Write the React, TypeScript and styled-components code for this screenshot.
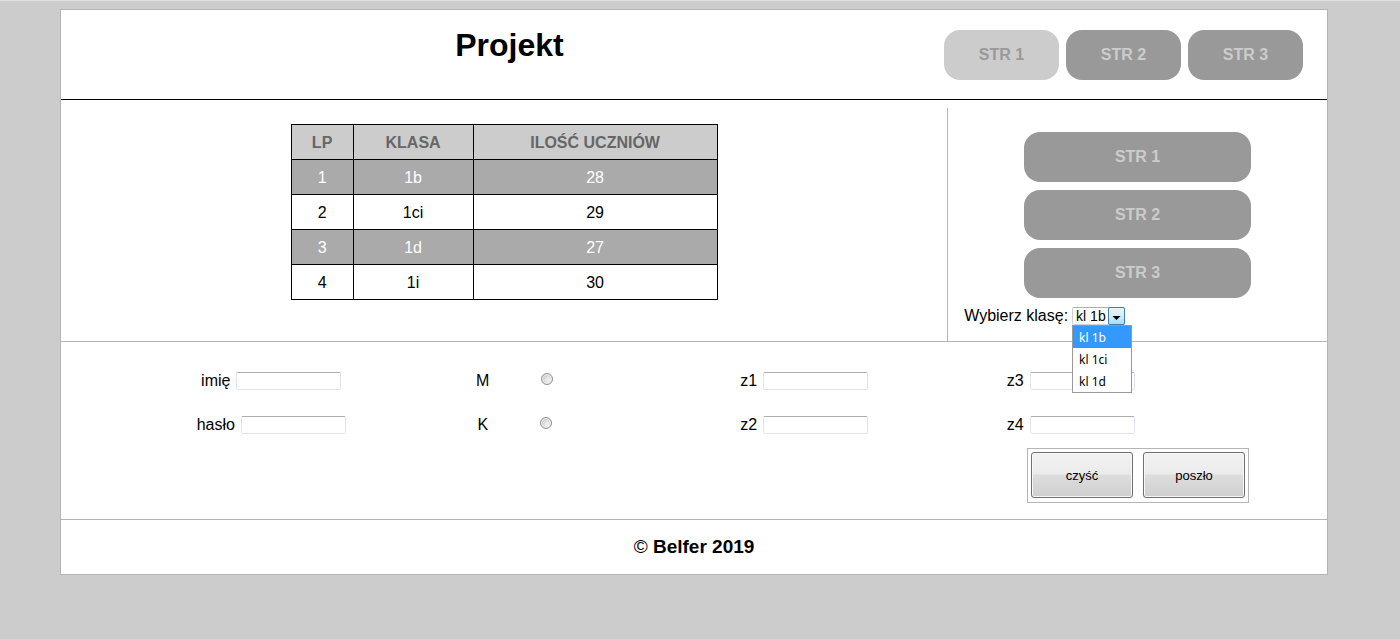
import React from "react";
import styled, { createGlobalStyle, css } from "styled-components";

const GlobalStyle = createGlobalStyle`
  * { box-sizing: border-box; }
  body {
    margin: 0;
    border-top: 1px solid #e2e2e2;
    background: #ccc;
    color: #000;
    font: 16px/20px "Liberation Sans", Arial, sans-serif;
  }
`;

const Page = styled.div`
  margin: 8px 72px 64px 60px;
  border: 1px solid #b5b5b5;
  background: #fff;
`;

const Header = styled.header`
  display: flex;
  align-items: flex-start;
  padding: 0 24px 0 14px;
  border-bottom: 1px solid #000;
`;

const Title = styled.h1`
  flex: 1;
  margin: 16px 0 0;
  font-size: 32px;
  line-height: 38px;
  text-align: center;
`;

const TopNav = styled.nav`
  display: flex;
  gap: 7px;
  padding: 20px 0 19px;
`;

const SideNav = styled.nav`
  display: flex;
  flex-direction: column;
  gap: 8px;
  padding: 0 60px;
`;

const NavLink = styled.a<{ $active?: boolean }>`
  display: block;
  min-width: 115px;
  border-radius: 16px;
  background: ${(p) => (p.$active ? "#ccc" : "#999")};
  color: ${(p) => (p.$active ? "#999" : "#ccc")};
  font-weight: bold;
  line-height: 50px;
  text-align: center;
  text-decoration: none;
`;

const Main = styled.main`
  display: flex;
  padding-top: 8px;
  border-bottom: 1px solid #b5b5b5;
`;

const Content = styled.section`
  flex: 1;
  padding: 16px 0 41px;
`;

const Sidebar = styled.aside`
  width: 30%;
  padding: 24px 16px 0;
  border-left: 1px solid #b5b5b5;
`;

const ClassTable = styled.table`
  margin: 0 auto;
  border-collapse: collapse;
  text-align: center;
`;

const cell = css`
  height: 35px;
  padding: 2px 0 0;
  border: 1px solid #000;
`;

const HeadCell = styled.th<{ $width: number }>`
  ${cell}
  width: ${(p) => p.$width}px;
  background: #ccc;
  color: #666;
`;

const Cell = styled.td`
  ${cell}
`;

const Row = styled.tr`
  &:nth-child(odd) {
    background: #aaa;
    color: #fff;
  }
`;

const Picker = styled.div`
  display: flex;
  align-items: center;
  gap: 4px;
  padding-top: 8px;
`;

const SelectBox = styled.div`
  position: relative;
  display: flex;
`;

const Select = styled.select`
  appearance: none;
  width: 53px;
  height: 18px;
  padding: 0 0 0 3px;
  border: 1px solid #ccd0d8;
  border-top-color: #abadb3;
  border-radius: 2px;
  background: #fff;
  color: #000;
  font: 14px/16px "Liberation Sans", Arial, sans-serif;
`;

const Arrow = styled.svg`
  position: absolute;
  top: 0;
  right: 0;
  pointer-events: none;
`;

const OptionList = styled.ul`
  position: absolute;
  top: 100%;
  left: 0;
  z-index: 1;
  width: 60px;
  margin: 0;
  padding: 0;
  border: 1px solid #999;
  background: #fff;
  font: 12px/20px "Noto Sans", sans-serif;
  list-style: none;
`;

const Option = styled.li<{ $selected: boolean }>`
  padding: 2px 0 0 6px;
  background: ${(p) => (p.$selected ? "#39f" : "#fff")};
  color: ${(p) => (p.$selected ? "#fff" : "#000")};
`;

const Form = styled.form`
  padding: 29px 0 16px;
  border-bottom: 1px solid #b5b5b5;
`;

const Fields = styled.div`
  display: grid;
  grid-template-columns: repeat(4, 1fr);
  row-gap: 24px;
  padding: 0 123px 0 77px;
`;

const Field = styled.label`
  display: flex;
  align-items: center;
  justify-content: center;
  gap: 6px;
`;

const TextBox = styled.input`
  width: 105px;
  height: 18px;
  padding: 0 2px;
  border: 1px solid #e2e3ea;
  border-top-color: #abadb3;
  border-radius: 2px;
  background: #fff;
`;

const Radio = styled.input`
  appearance: none;
  width: 12px;
  height: 12px;
  margin: 0 46px 4px;
  border: 1px solid #8e8f8f;
  border-radius: 50%;
  background: radial-gradient(circle at 65% 65%, #f4f4f4, #b8bcc0);
  box-shadow: inset 0 0 0 1px #f4f4f4;
`;

const Actions = styled.div`
  display: flex;
  gap: 10px;
  width: max-content;
  margin: 13px 78px 0 auto;
  padding: 3px 3px 4px;
  border: 1px solid #b5b5b5;
`;

const Button = styled.button`
  width: 102px;
  height: 46px;
  padding: 2px 0 0;
  border: 1px solid #707070;
  border-radius: 3px;
  background: linear-gradient(#f2f2f2, #ebebeb 48%, #ddd 50%, #cfcfcf);
  box-shadow: inset 0 0 0 1px #f8f8f8;
  color: #000;
  font: 13px/20px "Liberation Sans", Arial, sans-serif;
`;

const Footer = styled.footer`
  padding: 17px 0;
  font-size: 19px;
  font-weight: bold;
  text-align: center;
`;

const Mark = styled.span`
  font-weight: normal;
`;

const links = ["STR 1", "STR 2", "STR 3"];
const columns = [
  { name: "LP", width: 62 },
  { name: "KLASA", width: 120 },
  { name: "ILOŚĆ UCZNIÓW", width: 244 },
];
const classes = [
  ["1", "1b", "28"],
  ["2", "1ci", "29"],
  ["3", "1d", "27"],
  ["4", "1i", "30"],
];
const options = ["kl 1b", "kl 1ci", "kl 1d"];
const fields = [
  { label: "imię", type: "text" },
  { label: "M", type: "radio" },
  { label: "z1", type: "text" },
  { label: "z3", type: "text" },
  { label: "hasło", type: "password" },
  { label: "K", type: "radio" },
  { label: "z2", type: "text" },
  { label: "z4", type: "text" },
];

export default function App() {
  const [selected, setSelected] = React.useState(options[0]);

  return (
    <>
      <GlobalStyle />
      <Page>
        <Header>
          <Title>Projekt</Title>
          <TopNav>
            {links.map((name, i) => (
              <NavLink key={name} href="#" $active={i === 0}>{name}</NavLink>
            ))}
          </TopNav>
        </Header>
        <Main>
          <Content>
            <ClassTable>
              <thead>
                <tr>
                  {columns.map((c) => (
                    <HeadCell key={c.name} $width={c.width}>{c.name}</HeadCell>
                  ))}
                </tr>
              </thead>
              <tbody>
                {classes.map((row) => (
                  <Row key={row[0]}>
                    {row.map((value) => <Cell key={value}>{value}</Cell>)}
                  </Row>
                ))}
              </tbody>
            </ClassTable>
          </Content>
          <Sidebar>
            <SideNav>
              {links.map((name) => (
                <NavLink key={name} href="#">{name}</NavLink>
              ))}
            </SideNav>
            <Picker>
              <label htmlFor="klasa">Wybierz klasę:</label>
              <SelectBox>
                <Select id="klasa" value={selected} onChange={(e) => setSelected(e.target.value)}>
                  {options.map((o) => <option key={o}>{o}</option>)}
                </Select>
                <Arrow width="17" height="18" viewBox="0 0 17 18" aria-hidden="true">
                  <defs>
                    <linearGradient id="arrowFill" x2="0" y2="1">
                      <stop offset="0" stopColor="#e8f5fc" />
                      <stop offset="0.5" stopColor="#d2ecfa" />
                      <stop offset="1" stopColor="#a9daf4" />
                    </linearGradient>
                  </defs>
                  <rect x="0.5" y="0.5" width="16" height="17" rx="1.5" fill="url(#arrowFill)" stroke="#3c7fb1" />
                  <path d="M4.500 9h8L8.500 13z" fill="#000" />
                </Arrow>
                <OptionList role="listbox" aria-label="Wybierz klasę">
                  {options.map((o) => (
                    <Option
                      key={o}
                      role="option"
                      aria-selected={o === selected}
                      $selected={o === selected}
                      onClick={() => setSelected(o)}
                    >
                      {o}
                    </Option>
                  ))}
                </OptionList>
              </SelectBox>
            </Picker>
          </Sidebar>
        </Main>
        <Form>
          <Fields>
            {fields.map(({ label, type }) => (
              <Field key={label}>
                {label}
                {type === "radio" ? (
                  <Radio type="radio" name="plec" value={label} />
                ) : (
                  <TextBox type={type} name={label} />
                )}
              </Field>
            ))}
          </Fields>
          <Actions>
            <Button type="reset">czyść</Button>
            <Button type="submit">poszło</Button>
          </Actions>
        </Form>
        <Footer>
          <Mark>©</Mark> Belfer 2019
        </Footer>
      </Page>
    </>
  );
}
